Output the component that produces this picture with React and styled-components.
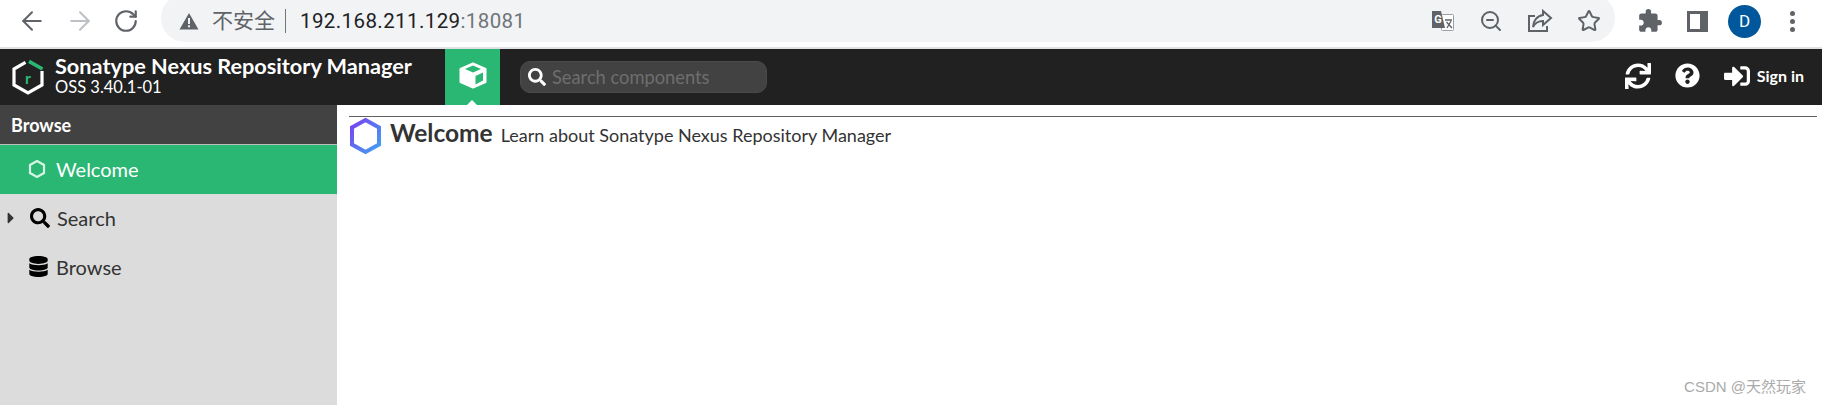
import React from 'react'
import styled, { createGlobalStyle } from 'styled-components'
import { ArrowLeft, ArrowRight, RotateCw, ZoomOut, Star } from 'lucide-react'
import { FaSync, FaQuestionCircle, FaSignInAlt, FaSearch, FaDatabase, FaCaretRight } from 'react-icons/fa'
import { MdExtension } from 'react-icons/md'

const GlobalStyle = createGlobalStyle`
  html, body {
    margin: 0;
    padding: 0;
    background: #fff;
    overflow: hidden;
  }
  * { box-sizing: border-box; }
`

const Page = styled.div`
  width: 1822px;
  height: 405px;
  display: flex;
  flex-direction: column;
  position: relative;
  overflow: hidden;
  font-family: Lato, "Noto Sans CJK SC", sans-serif;
`

const ChromeBar = styled.div`
  height: 49px;
  flex: none;
  display: flex;
  align-items: flex-start;
  padding-left: 17px;
  background: #fff;
  border-bottom: 2px solid #dfe1e5;
`

const NavIcons = styled.div`
  display: flex;
  align-items: center;
  gap: 18px;
  height: 42px;
  width: 144px;
`

const NavIcon = styled.span`
  display: flex;
  color: ${(p) => (p.$muted ? '#bdc1c6' : '#5f6368')};
`

const Omnibox = styled.div`
  width: 1454px;
  height: 48px;
  margin-top: -6px;
  padding: 6px 14px 0 18px;
  border-radius: 24px;
  background: #f1f3f4;
  display: flex;
  align-items: center;
  font-family: Roboto, "Noto Sans CJK SC", sans-serif;
`

const Warning = styled.svg`
  width: 20px;
  height: 18px;
  flex: none;
  margin-right: 13px;
`

const Insecure = styled.span`
  font-size: 21px;
  color: #5f6368;
  padding-right: 10px;
  border-right: 1px solid #70757a;
  line-height: 24px;
  margin-right: 14px;
`

const Host = styled.span`
  font-size: 20.5px;
  color: #202124;
  letter-spacing: 0.4px;
`

const Port = styled.span`
  color: #70757a;
`

const BoxIcons = styled.div`
  margin-left: auto;
  display: flex;
  align-items: center;
  gap: 24px;
  color: #5f6368;
`

const ChromeIcons = styled.div`
  display: flex;
  align-items: center;
  height: 42px;
  padding-left: 22px;
  color: #5f6368;
`

const Puzzle = styled(MdExtension)`
  margin-right: 24px;
`

const Avatar = styled.div`
  width: 33px;
  height: 33px;
  margin: 0 29px 0 20px;
  border-radius: 50%;
  background: #01579b;
  color: #fff;
  font-size: 17px;
  display: flex;
  align-items: center;
  justify-content: center;
  font-family: Roboto, sans-serif;
`

const Dots = styled.div`
  display: flex;
  flex-direction: column;
  gap: 3px;
  span {
    width: 5px;
    height: 5px;
    border-radius: 50%;
    background: #5f6368;
  }
`

const Header = styled.header`
  height: 56px;
  flex: none;
  background: #212121;
  display: flex;
  align-items: stretch;
  color: #fff;
`

const Brand = styled.div`
  width: 445px;
  flex: none;
  display: flex;
  align-items: center;
  padding-left: 11px;
  gap: 10px;
`

const BrandText = styled.div`
  display: flex;
  flex-direction: column;
  margin-top: -3px;
`

const BrandTitle = styled.div`
  font-size: 21.7px;
  line-height: 23px;
  font-weight: 700;
`

const BrandVersion = styled.div`
  font-size: 16.5px;
  line-height: 18px;
`

const ModeTab = styled.div`
  width: 55px;
  flex: none;
  background: #2ab673;
  position: relative;
  display: flex;
  align-items: center;
  justify-content: center;
  padding-bottom: 4px;
  &::after {
    content: '';
    position: absolute;
    bottom: 0;
    left: 22px;
    border-left: 5px solid transparent;
    border-right: 5px solid transparent;
    border-bottom: 5px solid #fff;
  }
`

const SearchBox = styled.div`
  width: 247px;
  height: 32px;
  margin: 12px 0 0 20px;
  border-radius: 10px;
  background: #424242;
  border: 1px solid #4a4a4a;
  display: flex;
  align-items: center;
  padding-left: 7px;
  gap: 6px;
  font-size: 18.3px;
  color: #6e6e6e;
`

const HeaderActions = styled.div`
  margin-left: auto;
  display: flex;
  align-items: center;
  padding: 0 18px 3px 0;
`

const HeaderIcon = styled.span`
  display: flex;
  margin-right: 24px;
`

const SignIn = styled.span`
  font-size: 16px;
  font-weight: 700;
  margin-left: 7px;
`

const Body = styled.div`
  flex: 1;
  display: flex;
  min-height: 0;
`

const Sidebar = styled.aside`
  width: 337px;
  flex: none;
  background: #dcdcdc;
`

const SidebarTitle = styled.div`
  height: 40px;
  background: #424242;
  border-bottom: 1px solid #bdbdbd;
  color: #fff;
  font-size: 18px;
  font-weight: 700;
  display: flex;
  align-items: center;
  padding-left: 11px;
`

const NavItem = styled.div`
  height: 49px;
  padding-bottom: 2px;
  display: flex;
  align-items: center;
  font-size: 20px;
  color: ${(p) => (p.$active ? '#fff' : '#333')};
  background: ${(p) => (p.$active ? '#2ab673' : 'transparent')};
`

const Caret = styled.span`
  width: 28px;
  flex: none;
  display: flex;
  justify-content: flex-end;
  padding-right: 8px;
  color: #333;
`

const NavGlyph = styled.span`
  width: ${(p) => p.$width || 28}px;
  padding-left: ${(p) => p.$inset || 0}px;
  flex: none;
  display: flex;
  color: #000;
`

const Content = styled.main`
  flex: 1;
  padding: 11px 5px 0 12px;
`

const TitleRow = styled.div`
  border-top: 1px solid #616161;
  display: flex;
  align-items: flex-start;
`

const HexWrap = styled.svg`
  width: 33px;
  height: 38px;
  flex: none;
  margin-right: 8px;
`

const Title = styled.h1`
  margin: -1px 8px 0 0;
  font-size: 24.5px;
  line-height: 34px;
  font-weight: 700;
  color: #333;
`

const Subtitle = styled.span`
  font-size: 18px;
  color: #333;
  line-height: 36px;
`

const Watermark = styled.div`
  position: absolute;
  right: 16px;
  bottom: 8px;
  font-size: 15px;
  line-height: 20px;
  color: #aaa;
  font-family: "Liberation Sans", "Noto Sans CJK SC", sans-serif;
`

function Logo() {
  return (
    <svg width="34" height="38" viewBox="0 0 34 38">
      <path d="M31 13 V27 L17 35 L3 27 V11 L14.5 4.4" fill="none" stroke="#fff" strokeWidth="3.2" />
      <path d="M18 3.4 L31.5 11" fill="none" stroke="#2ab673" strokeWidth="3.6" />
      <text x="17" y="25.5" textAnchor="middle" fontSize="16" fontWeight="700" fill="#2ab673" fontFamily="Lato, sans-serif">r</text>
    </svg>
  )
}

function CubeIcon() {
  return (
    <svg width="28" height="27" viewBox="0 0 28 27">
      <path d="M14 1.5 L26.5 7 V20 L14 25.5 L1.5 20 V7 Z" fill="#fff" stroke="#fff" strokeWidth="2" strokeLinejoin="round" />
      <path d="M6 7 L14 3.5 L22 7 L14 10.5 Z" fill="#2ab673" />
      <path d="M16.5 14 L24 10.5 V18.5 L16.5 22.5 Z" fill="#2ab673" />
    </svg>
  )
}

function TranslateIcon() {
  return (
    <svg width="24" height="24" viewBox="0 0 24 24">
      <rect x="10.5" y="5.5" width="12" height="16" rx="1" fill="#fff" stroke="#9aa0a6" />
      <path d="M1 2 H10 L14 19 H1 Z" fill="#5f6368" />
      <text x="7" y="14" textAnchor="middle" fontSize="11" fontWeight="700" fill="#fff" fontFamily="Roboto, sans-serif">G</text>
      <path d="M14 11 H21 M16 19 L20 12 M15.5 13 L21 19" stroke="#5f6368" strokeWidth="1.3" fill="none" />
    </svg>
  )
}

function ShareIcon() {
  return (
    <svg width="26" height="24" viewBox="0 0 26 24" fill="none" stroke="#5f6368" strokeWidth="2">
      <path d="M8 7 H2 V22 H20 V17" />
      <path d="M16 2 L24 9 L16 16 V12 C11 12 8 14 6 18 C6 12 10 7 16 6 Z" />
    </svg>
  )
}

function PanelIcon() {
  return (
    <svg width="21" height="21" viewBox="0 0 21 21">
      <rect width="21" height="21" fill="#5f6368" />
      <rect x="3" y="3" width="10" height="15" fill="#fff" />
    </svg>
  )
}

function SmallHex() {
  return (
    <svg width="18" height="20" viewBox="0 0 18 20">
      <path d="M9 2 L16 6 V14 L9 18 L2 14 V6 Z" fill="none" stroke="#d6f5e5" strokeWidth="2.2" />
    </svg>
  )
}

export default function App() {
  return (
    <Page>
      <GlobalStyle />
      <ChromeBar>
        <NavIcons>
          <NavIcon><ArrowLeft size={30} strokeWidth={1.6} /></NavIcon>
          <NavIcon $muted><ArrowRight size={30} strokeWidth={1.6} /></NavIcon>
          <NavIcon><RotateCw size={26} /></NavIcon>
        </NavIcons>
        <Omnibox>
          <Warning viewBox="0 0 20 18">
            <path d="M10 1 L19.5 17.5 H0.5 Z" fill="#5f6368" />
            <rect x="9" y="6" width="2" height="6" fill="#f1f3f4" />
            <rect x="9" y="13.3" width="2" height="2" fill="#f1f3f4" />
          </Warning>
          <Insecure>不安全</Insecure>
          <Host>192.168.211.129<Port>:18081</Port></Host>
          <BoxIcons>
            <TranslateIcon />
            <ZoomOut size={24} />
            <ShareIcon />
            <Star size={24} />
          </BoxIcons>
        </Omnibox>
        <ChromeIcons>
          <Puzzle size={26} />
          <PanelIcon />
          <Avatar>D</Avatar>
          <Dots><span /><span /><span /></Dots>
        </ChromeIcons>
      </ChromeBar>
      <Header>
        <Brand>
          <Logo />
          <BrandText>
            <BrandTitle>Sonatype Nexus Repository Manager</BrandTitle>
            <BrandVersion>OSS 3.40.1-01</BrandVersion>
          </BrandText>
        </Brand>
        <ModeTab><CubeIcon /></ModeTab>
        <SearchBox>
          <FaSearch size={18} color="#fff" />
          Search components
        </SearchBox>
        <HeaderActions>
          <HeaderIcon><FaSync size={26} /></HeaderIcon>
          <HeaderIcon><FaQuestionCircle size={25} /></HeaderIcon>
          <FaSignInAlt size={26} />
          <SignIn>Sign in</SignIn>
        </HeaderActions>
      </Header>
      <Body>
        <Sidebar>
          <SidebarTitle>Browse</SidebarTitle>
          <NavItem $active>
            <Caret />
            <NavGlyph><SmallHex /></NavGlyph>
            Welcome
          </NavItem>
          <NavItem>
            <Caret><FaCaretRight size={18} /></Caret>
            <NavGlyph $width={29} $inset={2}><FaSearch size={20} /></NavGlyph>
            Search
          </NavItem>
          <NavItem>
            <Caret />
            <NavGlyph><FaDatabase size={21} /></NavGlyph>
            Browse
          </NavItem>
        </Sidebar>
        <Content>
          <TitleRow>
            <HexWrap viewBox="0 0 33 38">
              <defs>
                <linearGradient id="hexGrad" x1="0" y1="0" x2="1" y2="1">
                  <stop offset="0" stopColor="#7b3ff2" />
                  <stop offset="1" stopColor="#3fa4f0" />
                </linearGradient>
              </defs>
              <path d="M16.5 3 L30 10.5 V27.5 L16.5 35 L3 27.5 V10.5 Z" fill="none" stroke="url(#hexGrad)" strokeWidth="4" />
            </HexWrap>
            <Title>Welcome</Title>
            <Subtitle>Learn about Sonatype Nexus Repository Manager</Subtitle>
          </TitleRow>
        </Content>
      </Body>
      <Watermark>CSDN @天然玩家</Watermark>
    </Page>
  )
}
